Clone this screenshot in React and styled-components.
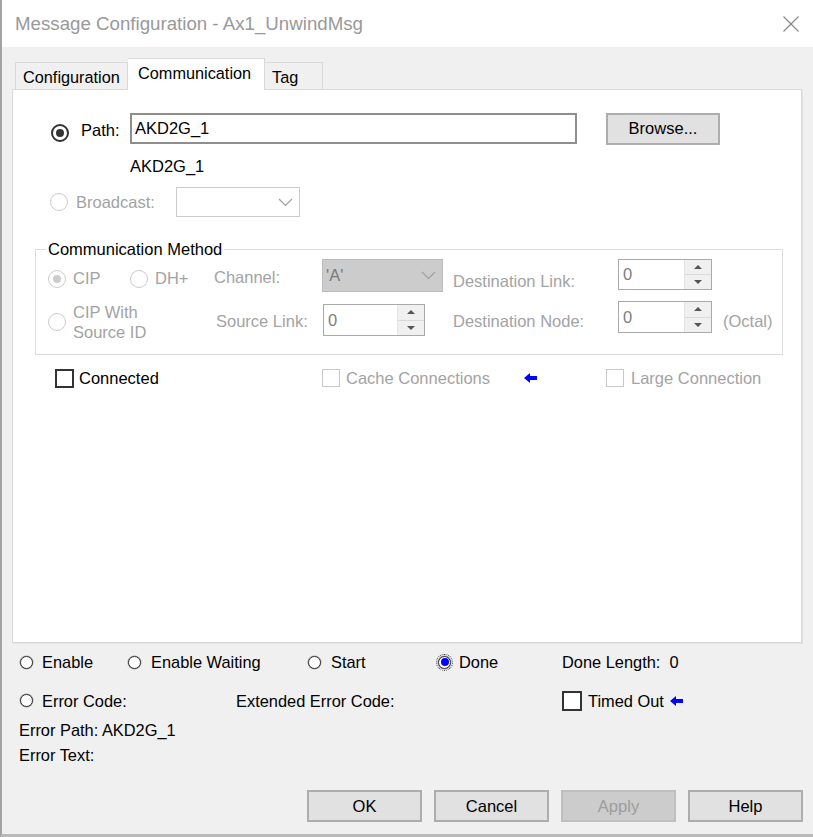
import React from "react";
import styled, { createGlobalStyle } from "styled-components";

const GlobalStyle = createGlobalStyle`
  html, body { margin: 0; padding: 0; background: #f0f0f0; }
  body { font-family: "Liberation Sans", Arial, sans-serif; color: #000; }
  * { box-sizing: border-box; }
`;

const Window = styled.div`
  width: 813px;
  height: 837px;
  display: flex;
  flex-direction: column;
  border-left: 2px solid #a3a3a3;
  border-bottom: 3px solid #bababa;
  background: #f0f0f0;
  overflow: hidden;
`;

const TitleBar = styled.div`
  flex: none;
  height: 47px;
  background: #fff;
  display: flex;
  align-items: center;
  justify-content: space-between;
  padding: 0 14px 0 13px;
`;

const Title = styled.div`
  font-size: 18.7px;
  color: #999999;
`;

const CloseButton = styled.svg`
  width: 16px;
  height: 16px;
  display: block;
`;

const Body = styled.div`
  flex: 1;
  display: flex;
  flex-direction: column;
  padding: 11px 11px 0 10px;
`;

const TabStrip = styled.div`
  flex: none;
  height: 32px;
  display: flex;
  align-items: flex-end;
  padding-left: 3px;
  margin-bottom: -1px;
  position: relative;
  z-index: 1;
`;

const Tab = styled.div`
  width: ${(p) => p.$w}px;
  height: ${(p) => (p.$active ? 32 : 27)}px;
  margin-bottom: ${(p) => (p.$active ? 0 : 1)}px;
  background: ${(p) => (p.$active ? "#fff" : "#f0f0f0")};
  border: 1px solid #d9d9d9;
  border-bottom: none;
  border-left-width: ${(p) => (p.$joinLeft ? 0 : 1)}px;
  display: flex;
  align-items: center;
  padding: ${(p) => (p.$active ? "0 0 2px 10px" : "2px 0 0 7px")};
  font-size: 16.3px;
  color: #000;
  white-space: nowrap;
`;

const Panel = styled.div`
  flex: none;
  height: 554px;
  background: #fff;
  border: 1px solid #d9d9d9;
  box-shadow: 1px 1px 0 #e2e2e2;
  display: flex;
  flex-direction: column;
  padding-top: 22px;
  font-size: 16.5px;
`;

const Row = styled.div`
  display: flex;
  align-items: ${(p) => p.$align || "center"};
  height: ${(p) => (p.$h ? `${p.$h}px` : "auto")};
  margin-top: ${(p) => p.$mt || 0}px;
  padding-left: ${(p) => p.$pl || 0}px;
`;

const Cell = styled.div`
  flex: none;
  display: flex;
  align-items: center;
  width: ${(p) => (p.$w ? `${p.$w}px` : "auto")};
  margin-top: ${(p) => p.$top || 0}px;
  margin-left: ${(p) => p.$ml || 0}px;
  gap: ${(p) => p.$gap || 0}px;
`;

const Text = styled.span`
  flex: none;
  line-height: ${(p) => p.$lh || 19}px;
  color: ${(p) => (p.$dim ? "#a3a3a3" : "#000")};
  margin-top: ${(p) => p.$top || 0}px;
  white-space: nowrap;
`;

const Radio = styled.span`
  flex: none;
  width: 18px;
  height: 18px;
  border-radius: 50%;
  border: ${(p) => (p.$disabled ? "1px solid #cccccc" : "2px solid #333333")};
  background: #fff;
  margin-top: ${(p) => p.$top || 0}px;
  display: flex;
  align-items: center;
  justify-content: center;
  &::after {
    content: "";
    display: ${(p) => (p.$checked ? "block" : "none")};
    width: 8px;
    height: 8px;
    border-radius: 50%;
    background: ${(p) => (p.$disabled ? "#cccccc" : "#333333")};
  }
`;

const Check = styled.span`
  flex: none;
  width: ${(p) => p.$size || 19}px;
  height: ${(p) => p.$size || 19}px;
  border: ${(p) => (p.$disabled ? "1px solid #c8c8c8" : "2px solid #333333")};
  background: #fff;
`;

const TextInput = styled.div`
  flex: none;
  width: 447px;
  height: 31px;
  border: 2px solid #8e8e8e;
  background: #fff;
  display: flex;
  align-items: center;
  padding-left: 3px;
  font-size: 16.5px;
`;

const Button = styled.div`
  flex: none;
  width: ${(p) => p.$w || 115}px;
  height: 32px;
  margin-left: ${(p) => p.$ml || 0}px;
  background: ${(p) => (p.$disabled ? "#cccccc" : "#e1e1e1")};
  border: 2px solid ${(p) => (p.$disabled ? "#bfbfbf" : "#adadad")};
  color: ${(p) => (p.$disabled ? "#9d9d9d" : "#000")};
  display: flex;
  align-items: center;
  justify-content: center;
  font-size: 16.5px;
`;

const Combo = styled.div`
  flex: none;
  width: ${(p) => p.$w}px;
  height: ${(p) => p.$h}px;
  margin-left: ${(p) => p.$ml || 0}px;
  background: ${(p) => (p.$filled ? "#cccccc" : "#fff")};
  border: 1px solid ${(p) => (p.$filled ? "#bcbcbc" : "#cccccc")};
  display: flex;
  align-items: center;
  justify-content: space-between;
  padding: 0 6px 0 3px;
  color: #7a7a7a;
`;

const Chevron = () => (
  <svg width="15" height="9" viewBox="0 0 15 9">
    <polyline points="1,1 7.5,7.5 14,1" fill="none" stroke="#a0a0a0" strokeWidth="1.2" />
  </svg>
);

const Spin = styled.div`
  flex: none;
  width: ${(p) => p.$w}px;
  height: ${(p) => p.$h}px;
  margin-top: ${(p) => p.$top || 0}px;
  margin-left: ${(p) => p.$ml || 0}px;
  border: 1px solid #a9a9a9;
  background: #fff;
  display: flex;
`;

const SpinValue = styled.div`
  flex: 1;
  display: flex;
  align-items: center;
  padding-left: 4px;
  color: #808080;
`;

const SpinButtons = styled.div`
  flex: none;
  width: 27px;
  display: flex;
  flex-direction: column;
  border-left: 1px solid #e3e3e3;
`;

const SpinButton = styled.div`
  flex: 1;
  display: flex;
  align-items: center;
  justify-content: center;
  background: #f0f0f0;
  border-bottom: ${(p) => (p.$up ? "1px solid #dadada" : "none")};
  &::before {
    content: "";
    width: 0;
    height: 0;
    border-left: 4px solid transparent;
    border-right: 4px solid transparent;
    ${(p) => (p.$up ? "border-bottom: 4px solid #555;" : "border-top: 4px solid #555;")}
  }
`;

const SpinBox = ({ w, h, top, ml }) => (
  <Spin $w={w} $h={h} $top={top} $ml={ml}>
    <SpinValue>0</SpinValue>
    <SpinButtons>
      <SpinButton $up />
      <SpinButton />
    </SpinButtons>
  </Spin>
);

const Group = styled.fieldset`
  margin: 23px 18px 0 22px;
  padding: 0 0 12px 0;
  border: 1px solid #dcdcdc;
  min-inline-size: 0;
`;

const Legend = styled.legend`
  margin-left: 10px;
  padding: 0 2px;
  line-height: 19px;
  font-size: 16.5px;
  color: #000;
`;

const Arrow = () => (
  <svg width="13" height="10" viewBox="0 0 13 10">
    <polygon points="0,5 6,0 6,3 13,3 13,7 6,7 6,10" fill="#0000ff" />
  </svg>
);

const Status = styled.div`
  flex: 1;
  display: flex;
  flex-direction: column;
  font-size: 16.4px;
`;

const SmallRadio = styled.span`
  flex: none;
  width: 13px;
  height: 13px;
  border-radius: 50%;
  border: 1.5px solid #333333;
  background: #fff;
  box-shadow: 0 0 0 0.5px #a0a0a0;
  display: flex;
  align-items: center;
  justify-content: center;
  outline: ${(p) => (p.$checked ? "1px dotted #444" : "none")};
  outline-offset: 1px;
  &::after {
    content: "";
    display: ${(p) => (p.$checked ? "block" : "none")};
    width: 8px;
    height: 8px;
    border-radius: 50%;
    background: #0000ff;
  }
`;

const Buttons = styled.div`
  display: flex;
  justify-content: flex-end;
  gap: 12px;
  margin-top: 25px;
  margin-right: -1px;
`;

export default function App() {
  return (
    <>
      <GlobalStyle />
      <Window>
        <TitleBar>
          <Title>Message Configuration - Ax1_UnwindMsg</Title>
          <CloseButton viewBox="0 0 16 16">
            <line x1="0.5" y1="0.5" x2="15.5" y2="15.5" stroke="#8a8a8a" strokeWidth="1.3" />
            <line x1="15.5" y1="0.5" x2="0.5" y2="15.5" stroke="#8a8a8a" strokeWidth="1.3" />
          </CloseButton>
        </TitleBar>

        <Body>
          <TabStrip>
            <Tab $w={113}>Configuration</Tab>
            <Tab $w={137} $active $joinLeft>
              Communication
            </Tab>
            <Tab $w={58} $joinLeft>
              Tag
            </Tab>
          </TabStrip>

          <Panel>
            <Row $h={33} $pl={38}>
              <Radio $checked $top={8} />
              <Text $top={4} style={{ marginLeft: 12, width: 49 }}>Path:</Text>
              <TextInput>AKD2G_1</TextInput>
              <Button $w={114} $ml={29}>Browse...</Button>
            </Row>

            <Row $mt={12} $pl={117}>
              <Text>AKD2G_1</Text>
            </Row>

            <Row $h={30} $mt={11} $pl={37}>
              <Radio $disabled />
              <Text $dim style={{ marginLeft: 8, width: 100 }}>Broadcast:</Text>
              <Combo $w={124} $h={30}>
                <span />
                <Chevron />
              </Combo>
            </Row>

            <Group>
              <Legend>Communication Method</Legend>
              <Row $align="flex-start" $pl={12}>
                <Cell $w={82} $gap={7} $top={10}>
                  <Radio $disabled $checked />
                  <Text $dim>CIP</Text>
                </Cell>
                <Cell $w={84} $gap={7} $top={10}>
                  <Radio $disabled />
                  <Text $dim>DH+</Text>
                </Cell>
                <Cell $w={108} $top={9}>
                  <Text $dim>Channel:</Text>
                </Cell>
                <Combo $w={121} $h={33} $filled>
                  <span>'A'</span>
                  <Chevron />
                </Combo>
                <Cell $w={165} $ml={10} $top={13}>
                  <Text $dim>Destination Link:</Text>
                </Cell>
                <SpinBox w={94} h={31} />
              </Row>

              <Row $align="flex-start" $pl={12} $mt={10}>
                <Cell $w={168} $gap={7}>
                  <Radio $disabled />
                  <Text $dim $lh={20}>
                    CIP With
                    <br />
                    Source ID
                  </Text>
                </Cell>
                <Cell $w={107} $top={10}>
                  <Text $dim>Source Link:</Text>
                </Cell>
                <SpinBox w={102} h={32} top={2} />
                <Cell $w={165} $ml={28} $top={10}>
                  <Text $dim>Destination Node:</Text>
                </Cell>
                <SpinBox w={94} h={32} top={-1} />
                <Cell $ml={11} $top={10}>
                  <Text $dim>(Octal)</Text>
                </Cell>
              </Row>
            </Group>

            <Row $h={20} $mt={13} $pl={42}>
              <Cell $w={267} $gap={5}>
                <Check />
                <Text>Connected</Text>
              </Cell>
              <Cell $w={202} $gap={6}>
                <Check $disabled $size={18} />
                <Text $dim>Cache Connections</Text>
              </Cell>
              <Cell $w={82}>
                <Arrow />
              </Cell>
              <Cell $gap={7}>
                <Check $disabled $size={18} />
                <Text $dim>Large Connection</Text>
              </Cell>
            </Row>
          </Panel>

          <Status>
            <Row $h={20} $mt={9} $pl={8}>
              <Cell $w={108} $gap={9}>
                <SmallRadio />
                <Text $lh={20}>Enable</Text>
              </Cell>
              <Cell $w={180} $gap={10}>
                <SmallRadio />
                <Text $lh={20}>Enable Waiting</Text>
              </Cell>
              <Cell $w={130} $gap={10}>
                <SmallRadio />
                <Text $lh={20}>Start</Text>
              </Cell>
              <Cell $w={124} $gap={8}>
                <SmallRadio $checked />
                <Text $lh={20}>Done</Text>
              </Cell>
              <Text $lh={20}>Done Length:&nbsp;&nbsp;0</Text>
            </Row>

            <Row $h={21} $mt={18} $pl={8}>
              <Cell $w={216} $gap={9}>
                <SmallRadio />
                <Text $lh={20}>Error Code:</Text>
              </Cell>
              <Cell $w={326}>
                <Text $lh={20}>Extended Error Code:</Text>
              </Cell>
              <Cell $gap={6}>
                <Check $size={20} />
                <Text $lh={20}>Timed Out</Text>
                <Arrow />
              </Cell>
            </Row>

            <Row $mt={9} $pl={7}>
              <Text $lh={20}>Error Path: AKD2G_1</Text>
            </Row>
            <Row $mt={5} $pl={7}>
              <Text $lh={20}>Error Text:</Text>
            </Row>

            <Buttons>
              <Button>OK</Button>
              <Button>Cancel</Button>
              <Button $disabled>Apply</Button>
              <Button>Help</Button>
            </Buttons>
          </Status>
        </Body>
      </Window>
    </>
  );
}
